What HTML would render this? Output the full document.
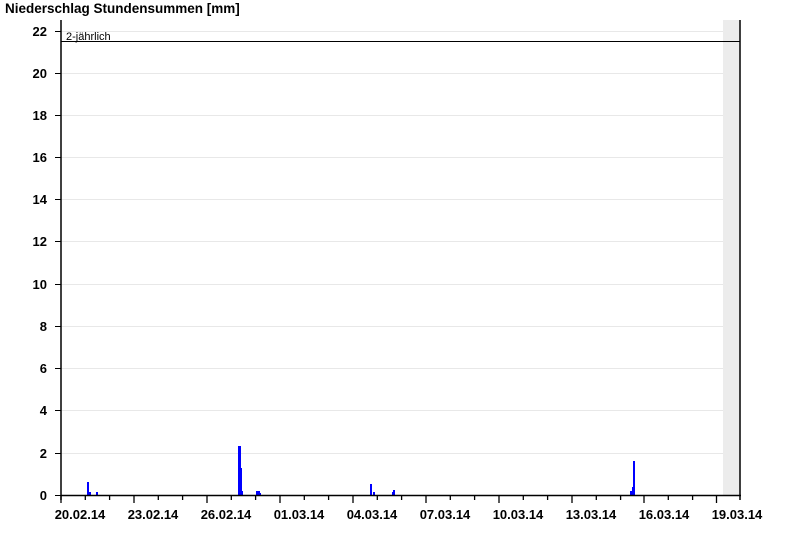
<!DOCTYPE html>
<html><head><meta charset="utf-8"><style>
html,body{margin:0;padding:0;background:#fff;}
svg{display:block;font-family:"Liberation Sans",Arial,sans-serif;}
</style></head><body>
<svg width="800" height="550" viewBox="0 0 800 550" xmlns="http://www.w3.org/2000/svg">
<text x="5" y="13" font-size="13.5" font-weight="bold" fill="#000">Niederschlag Stundensummen [mm]</text>
<rect x="723" y="20" width="17" height="475" fill="#ececec"/>
<g stroke="#e8e8e8" stroke-width="1">
<line x1="61" x2="723" y1="31.5" y2="31.5"/>
<line x1="61" x2="723" y1="73.5" y2="73.5"/>
<line x1="61" x2="723" y1="115.5" y2="115.5"/>
<line x1="61" x2="723" y1="157.5" y2="157.5"/>
<line x1="61" x2="723" y1="199.5" y2="199.5"/>
<line x1="61" x2="723" y1="241.5" y2="241.5"/>
<line x1="61" x2="723" y1="284.5" y2="284.5"/>
<line x1="61" x2="723" y1="326.5" y2="326.5"/>
<line x1="61" x2="723" y1="368.5" y2="368.5"/>
<line x1="61" x2="723" y1="410.5" y2="410.5"/>
<line x1="61" x2="723" y1="453.5" y2="453.5"/>
</g>
<line x1="61" x2="740" y1="41.5" y2="41.5" stroke="#000"/>
<text x="66" y="40" font-size="11" fill="#000">2-jährlich</text>
<g fill="#0000ff">
<rect x="87" y="482" width="2" height="13"/>
<rect x="89" y="492" width="2" height="3"/>
<rect x="96" y="492" width="2" height="3"/>
<rect x="238" y="446" width="3" height="49"/>
<rect x="241" y="468" width="1" height="27"/>
<rect x="241" y="491" width="2" height="4"/>
<rect x="256" y="491" width="4" height="4"/>
<rect x="260" y="493" width="1" height="2"/>
<rect x="370" y="484" width="2" height="11"/>
<rect x="373" y="492" width="2" height="3"/>
<rect x="393" y="490" width="2" height="5"/>
<rect x="392" y="492" width="1" height="3"/>
<rect x="630" y="491" width="2" height="4"/>
<rect x="632" y="487" width="1" height="8"/>
<rect x="633" y="461" width="2" height="34"/>
</g>
<g stroke="#000" stroke-width="1.5">
<line x1="61" x2="61" y1="20" y2="500"/>
<line x1="740" x2="740" y1="20" y2="500"/>
<line x1="61" x2="741" y1="495.5" y2="495.5"/>
</g>
<g stroke="#000" stroke-width="1">
<line x1="55" x2="61" y1="31.5" y2="31.5"/>
<line x1="55" x2="61" y1="73.5" y2="73.5"/>
<line x1="55" x2="61" y1="115.5" y2="115.5"/>
<line x1="55" x2="61" y1="157.5" y2="157.5"/>
<line x1="55" x2="61" y1="199.5" y2="199.5"/>
<line x1="55" x2="61" y1="241.5" y2="241.5"/>
<line x1="55" x2="61" y1="284.5" y2="284.5"/>
<line x1="55" x2="61" y1="326.5" y2="326.5"/>
<line x1="55" x2="61" y1="368.5" y2="368.5"/>
<line x1="55" x2="61" y1="410.5" y2="410.5"/>
<line x1="55" x2="61" y1="453.5" y2="453.5"/>
<line x1="55" x2="61" y1="495.5" y2="495.5"/>
</g>
<g font-size="13" font-weight="bold" fill="#000" text-anchor="end">
<text x="47" y="36">22</text>
<text x="47" y="78">20</text>
<text x="47" y="120">18</text>
<text x="47" y="162">16</text>
<text x="47" y="204">14</text>
<text x="47" y="246">12</text>
<text x="47" y="289">10</text>
<text x="47" y="331">8</text>
<text x="47" y="373">6</text>
<text x="47" y="415">4</text>
<text x="47" y="458">2</text>
<text x="47" y="500">0</text>
</g>
<g stroke="#000" stroke-width="1.3">
<line x1="61" x2="61" y1="495" y2="503"/>
<line x1="85.3" x2="85.3" y1="495" y2="500"/>
<line x1="109.6" x2="109.6" y1="495" y2="500"/>
<line x1="134" x2="134" y1="495" y2="503"/>
<line x1="158.3" x2="158.3" y1="495" y2="500"/>
<line x1="182.6" x2="182.6" y1="495" y2="500"/>
<line x1="207" x2="207" y1="495" y2="503"/>
<line x1="231.3" x2="231.3" y1="495" y2="500"/>
<line x1="255.6" x2="255.6" y1="495" y2="500"/>
<line x1="280" x2="280" y1="495" y2="503"/>
<line x1="304.3" x2="304.3" y1="495" y2="500"/>
<line x1="328.6" x2="328.6" y1="495" y2="500"/>
<line x1="353" x2="353" y1="495" y2="503"/>
<line x1="377.3" x2="377.3" y1="495" y2="500"/>
<line x1="401.6" x2="401.6" y1="495" y2="500"/>
<line x1="426" x2="426" y1="495" y2="503"/>
<line x1="450.3" x2="450.3" y1="495" y2="500"/>
<line x1="474.6" x2="474.6" y1="495" y2="500"/>
<line x1="499" x2="499" y1="495" y2="503"/>
<line x1="523.3" x2="523.3" y1="495" y2="500"/>
<line x1="547.6" x2="547.6" y1="495" y2="500"/>
<line x1="572" x2="572" y1="495" y2="503"/>
<line x1="596.3" x2="596.3" y1="495" y2="500"/>
<line x1="620.6" x2="620.6" y1="495" y2="500"/>
<line x1="644" x2="644" y1="495" y2="503"/>
<line x1="668.3" x2="668.3" y1="495" y2="500"/>
<line x1="692.6" x2="692.6" y1="495" y2="500"/>
<line x1="716.5" x2="716.5" y1="495" y2="503"/>
</g>
<g font-size="13" font-weight="bold" fill="#000" text-anchor="middle">
<text x="80" y="519">20.02.14</text>
<text x="153" y="519">23.02.14</text>
<text x="226" y="519">26.02.14</text>
<text x="299" y="519">01.03.14</text>
<text x="372" y="519">04.03.14</text>
<text x="445" y="519">07.03.14</text>
<text x="518" y="519">10.03.14</text>
<text x="591" y="519">13.03.14</text>
<text x="664" y="519">16.03.14</text>
<text x="737" y="519">19.03.14</text>
</g>
</svg>
</body></html>
